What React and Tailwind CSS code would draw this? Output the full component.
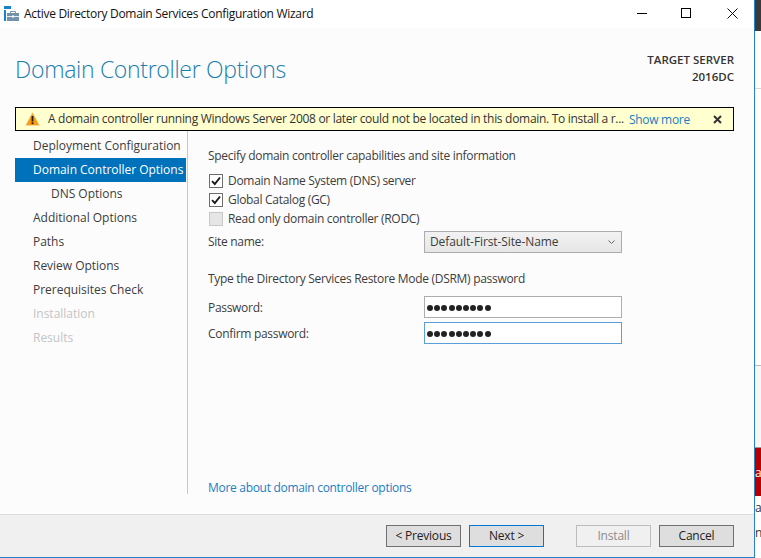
import React from "react";

const font = "font-['Open_Sans','Noto_Sans',sans-serif]";

const steps = [
  { label: "Deployment Configuration", cls: "pl-[18px] text-[#3c3c3c]" },
  { label: "Domain Controller Options", cls: "pl-[18px] text-white bg-[#0072bc]" },
  { label: "DNS Options", cls: "pl-[36px] text-[#3c3c3c]" },
  { label: "Additional Options", cls: "pl-[18px] text-[#3c3c3c]" },
  { label: "Paths", cls: "pl-[18px] text-[#3c3c3c]" },
  { label: "Review Options", cls: "pl-[18px] text-[#3c3c3c]" },
  { label: "Prerequisites Check", cls: "pl-[18px] text-[#3c3c3c]" },
  { label: "Installation", cls: "pl-[18px] text-[#c4c4c4]" },
  { label: "Results", cls: "pl-[18px] text-[#c4c4c4]" },
];

const WizardIcon = () => (
  <svg width="15" height="15" viewBox="0 0 15 15">
    <rect x="0" y="0" width="7" height="3" fill="#1582d2" />
    <rect x="0" y="4" width="2" height="11" fill="#1582d2" />
    <path d="M6.5 7V5.5h5V7" fill="none" stroke="#7c96aa" strokeWidth="1" />
    <rect x="3" y="7" width="12" height="8" fill="#7393ab" />
    <rect x="3" y="10" width="12" height="1" fill="#e4ebf0" />
    <rect x="8" y="9.5" width="2" height="2" fill="#ffffff" />
  </svg>
);

const WarnIcon = () => (
  <svg width="15" height="14" viewBox="0 0 15 14">
    <path d="M7.5 0.5L14.5 13.5H0.5Z" fill="#f59c12" stroke="#f6dfae" strokeWidth="0.6" />
    <rect x="6.6" y="4" width="1.8" height="5.5" fill="#222" />
    <rect x="6.6" y="10.3" width="1.8" height="1.8" fill="#222" />
  </svg>
);

const Check = ({ checked, disabled, label }) => (
  <div className="flex items-center h-[19px]">
    <div
      className={
        "w-[14px] h-[14px] ml-[1px] border flex items-center justify-center " +
        (disabled ? "border-[#c8c8c8] bg-[#e6e6e6]" : "border-[#6e6e6e] bg-white")
      }
    >
      {checked && (
        <svg width="10" height="10" viewBox="0 0 10 10">
          <path d="M1 5.2L3.8 8L9 1.5" fill="none" stroke="#1a1a1a" strokeWidth="1.9" />
        </svg>
      )}
    </div>
    <span className="ml-[5px] text-[#3c3c3c]">{label}</span>
  </div>
);

const Dots = () => (
  <div className="flex gap-[1.2px] pl-[2px] mt-[1px]">
    {[0, 1, 2, 3, 4, 5, 6, 7, 8].map((i) => (
      <span key={i} className="w-[6px] h-[6px] rounded-full bg-[#222]" />
    ))}
  </div>
);

const Btn = ({ children, cls }) => (
  <div className={"w-[75px] h-[22px] border flex items-center justify-center tracking-[-0.2px] " + cls}>{children}</div>
);

export default function App() {
  return (
    <div className={"w-[761px] h-[558px] flex overflow-hidden bg-white text-[12px] tracking-[-0.3px] " + font}>
      <div className="w-[755px] h-[558px] flex flex-col border-r border-b border-[#2b7fc4] bg-white">
        {/* title bar */}
        <div className="h-[28px] flex items-center bg-white shrink-0">
          <div className="ml-[4px] mr-[5px] mt-[-1px]">
            <WizardIcon />
          </div>
          <span className="text-[#111]">Active Directory Domain Services Configuration Wizard</span>
          <div className="ml-auto flex items-center mr-[16px] mb-[2px]">
            <div className="w-[10px] h-px bg-black" />
            <div className="ml-[34px] w-[10px] h-[10px] border border-black" />
            <svg className="ml-[36px]" width="11" height="11" viewBox="0 0 11 11">
              <path d="M0.5 0.5L10.5 10.5M10.5 0.5L0.5 10.5" stroke="#111" strokeWidth="1" />
            </svg>
          </div>
        </div>

        {/* header */}
        <div className="bg-[#fcfcfc] flex-1 flex flex-col min-h-0">
          <div className="h-[79px] flex justify-between shrink-0 pl-[15px] pr-[20px]">
            <div className="text-[23px] font-light text-[#1b7fb0] tracking-[-0.3px] mt-[24px] leading-[34px]">
              Domain Controller Options
            </div>
            <div className="text-right font-semibold text-[#333] mt-[23px] leading-[17px] text-[11.5px] tracking-[0px]">
              <div>TARGET SERVER</div>
              <div>2016DC</div>
            </div>
          </div>

          {/* warning */}
          <div className="ml-[15px] w-[719px] h-[24px] border border-black bg-[#ffffcf] flex items-center shrink-0 text-[#333]">
            <div className="ml-[9px] mr-[8px]">
              <WarnIcon />
            </div>
            <span className="w-[581px] whitespace-nowrap mb-[1px]">
              A domain controller running Windows Server 2008 or later could not be located in this domain. To install a r...
            </span>
            <span className="text-[#1c7cc4] mt-[2px]">Show more</span>
            <svg className="ml-auto mr-[11px] mt-[1px]" width="9" height="9" viewBox="0 0 9 9">
              <path d="M1 1L8 8M8 1L1 8" stroke="#333" strokeWidth="2" />
            </svg>
          </div>

          {/* body */}
          <div className="flex h-[363px] pl-[15px] shrink-0">
            <div className="w-[173px] border-r border-[#c8c8c8] pt-[3px] whitespace-nowrap tracking-[-0.02px]">
              {steps.map((s) => (
                <div key={s.label} className={"h-[24px] leading-[24px] w-[171px] " + s.cls}>
                  {s.label}
                </div>
              ))}
            </div>
            <div className="flex-1 pl-[20px] flex flex-col text-[#3c3c3c]">
              <div className="mt-[16px] leading-[17px]">Specify domain controller capabilities and site information</div>
              <div className="mt-[7px]">
                <Check checked label="Domain Name System (DNS) server" />
                <Check checked label="Global Catalog (GC)" />
                <Check disabled label="Read only domain controller (RODC)" />
              </div>
              <div className="flex items-center mt-[3px] h-[22px]">
                <span className="w-[216px]">Site name:</span>
                <div className="w-[198px] h-[22px] border border-[#adadad] bg-gradient-to-b from-[#f2f2f2] to-[#e6e6e6] flex items-center justify-between pl-[5px] pr-[6px] tracking-[-0.1px]">
                  <span>Default-First-Site-Name</span>
                  <svg width="7" height="5" viewBox="0 0 7 5">
                    <path d="M0.5 0.5L3.5 3.5L6.5 0.5" fill="none" stroke="#666" strokeWidth="1" />
                  </svg>
                </div>
              </div>
              <div className="mt-[17px] leading-[17px]">Type the Directory Services Restore Mode (DSRM) password</div>
              <div className="flex items-center mt-[9px] h-[22px]">
                <span className="w-[216px] mt-[2px]">Password:</span>
                <div className="w-[198px] h-[22px] border border-[#adadad] bg-white flex items-center">
                  <Dots />
                </div>
              </div>
              <div className="flex items-center mt-[4px] h-[22px]">
                <span className="w-[216px] mt-[2px]">Confirm password:</span>
                <div className="w-[198px] h-[22px] border border-[#5a9fdc] bg-white flex items-center">
                  <Dots />
                </div>
              </div>
              <div className="mt-auto mb-[-2px] leading-[17px] text-[#1c7cc4]">More about domain controller options</div>
            </div>
          </div>
          <div className="flex-1" />
        </div>

        {/* footer */}
        <div className="h-[43px] shrink-0 bg-[#f0f0f0] border-t border-[#dcdcdc] flex items-start pt-[10px] pl-[386px] text-[#222]">
          <Btn cls="border-[#707070] bg-[#dedede]">&lt; Previous</Btn>
          <Btn cls="ml-[8px] border-[#0078d7] bg-[#dedede]">Next &gt;</Btn>
          <Btn cls="ml-[32px] border-[#bcbcbc] bg-[#f0f0f0] text-[#8c8c8c]">Install</Btn>
          <Btn cls="ml-[8px] border-[#707070] bg-[#dedede]">Cancel</Btn>
        </div>
      </div>

      {/* sliver of the window behind */}
      <div className="w-[6px] h-[558px] flex flex-col shrink-0 bg-white overflow-hidden text-[#333]">
        <div className="h-[31px] bg-[#3a3a3a] shrink-0" />
        <div className="h-[57px] bg-white shrink-0" />
        <div className="h-[277px] border-t border-[#d8d8d8] bg-white shrink-0" />
        <div className="h-[82px] border-t border-[#bcbcbc] bg-[#f7f7f7] shrink-0" />
        <div className="h-[49px] bg-[#b80000] shrink-0 border-t border-[#999] text-white leading-[50px]">a</div>
        <div className="leading-[20px] mt-[2px] whitespace-nowrap">a</div>
        <div className="leading-[20px] mt-[5px] whitespace-nowrap">nt</div>
      </div>
    </div>
  );
}
